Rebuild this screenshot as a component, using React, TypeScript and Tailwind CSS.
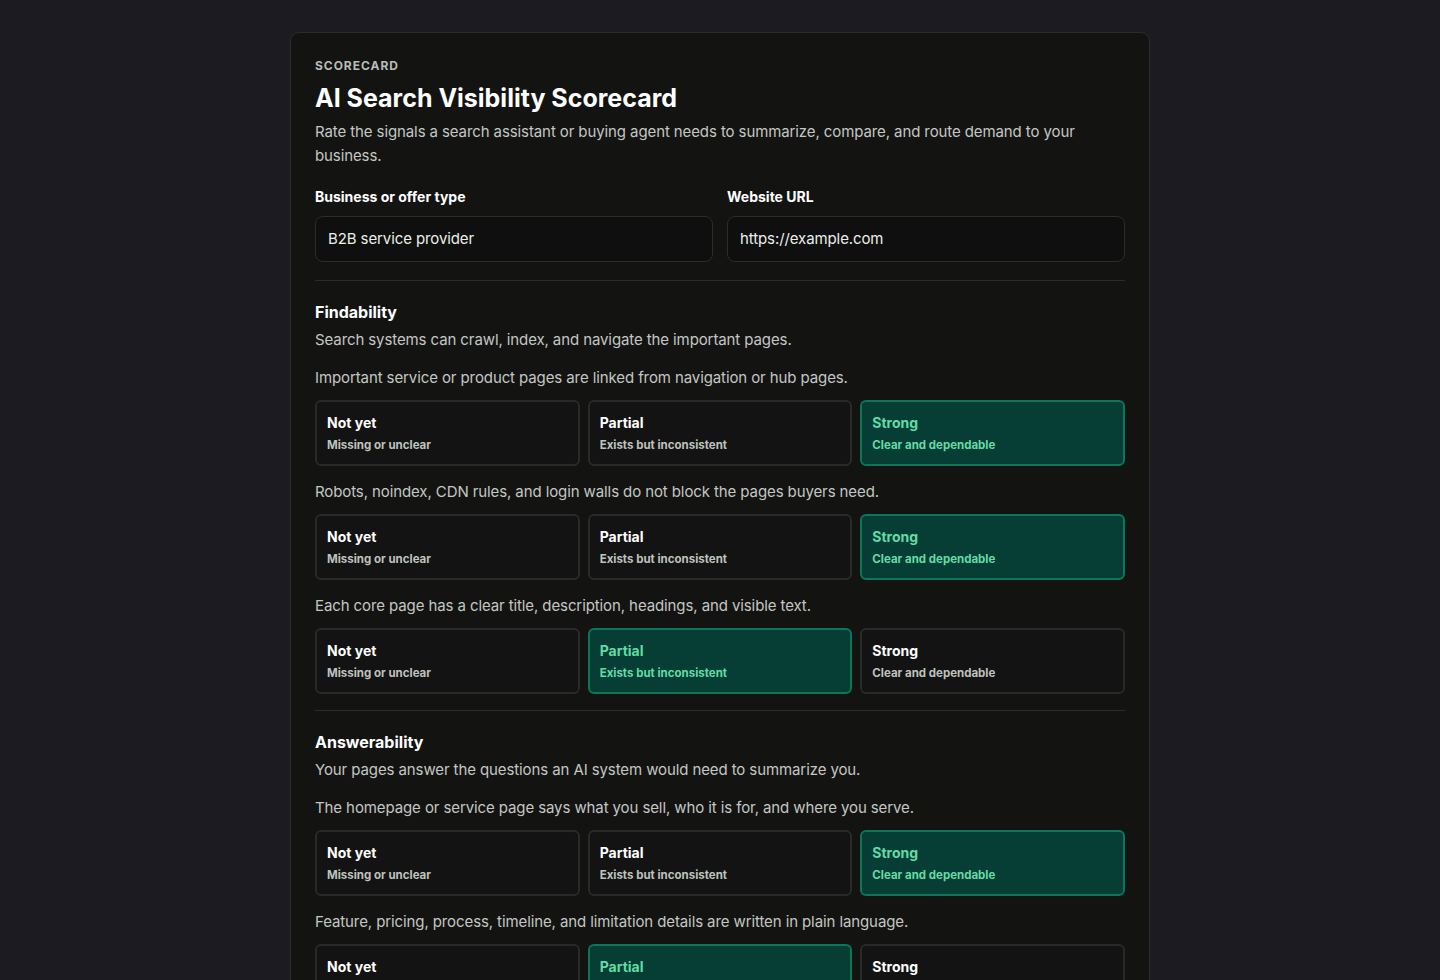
import React from "react";

type Sec = { title: string; desc: string; qs: { q: string; sel: number }[] };

const sections: Sec[] = [
  {
    title: "Findability",
    desc: "Search systems can crawl, index, and navigate the important pages.",
    qs: [
      { q: "Important service or product pages are linked from navigation or hub pages.", sel: 2 },
      { q: "Robots, noindex, CDN rules, and login walls do not block the pages buyers need.", sel: 2 },
      { q: "Each core page has a clear title, description, headings, and visible text.", sel: 1 },
    ],
  },
  {
    title: "Answerability",
    desc: "Your pages answer the questions an AI system would need to summarize you.",
    qs: [
      { q: "The homepage or service page says what you sell, who it is for, and where you serve.", sel: 2 },
      { q: "Feature, pricing, process, timeline, and limitation details are written in plain language.", sel: 1 },
      { q: "Common buyer questions are answered directly on the site.", sel: 0 },
    ],
  },
];

const opts = [
  { t: "Not yet", s: "Missing or unclear" },
  { t: "Partial", s: "Exists but inconsistent" },
  { t: "Strong", s: "Clear and dependable" },
];

export default function App() {
  return (
    <div
      className="min-h-screen bg-[#1c1b22] pt-[32px] pb-10"
      style={{ fontFamily: "Inter, 'Noto Sans', sans-serif" }}
    >
      <div className="mx-auto w-[860px] rounded-[9px] border border-[#2b2d2b] bg-[#131412] px-6 pt-[25px] pb-6">
        <div className="text-[12px] font-bold tracking-[0.08em] text-[#b9bcb8] leading-4">SCORECARD</div>
        <h1 className="mt-[9px] text-[25px] font-bold leading-[30px] text-white">
          AI Search Visibility Scorecard
        </h1>
        <p className="mt-[7px] text-[15px] leading-6 tracking-[-0.1px] text-[#c4c7c3]">
          Rate the signals a search assistant or buying agent needs to summarize, compare, and route demand to your business.
        </p>
        <div className="mt-[21px] grid grid-cols-2 gap-[14px]">
          {[
            ["Business or offer type", "B2B service provider"],
            ["Website URL", "https://example.com"],
          ].map(([l, v]) => (
            <div key={l}>
              <div className="text-[14px] font-bold leading-4 text-white">{l}</div>
              <div className="mt-[11px] flex h-[46px] items-center rounded-[8px] border border-[#2b2d2b] bg-[#0e0f0e] px-[12px] text-[15px] tracking-[-0.1px] text-[#eceeea]">
                {v}
              </div>
            </div>
          ))}
        </div>
        {sections.map((s, si) => (
          <div key={s.title} className={si === 0 ? "mt-[18px] border-t border-[#2b2d2b] pt-[19px]" : "mt-[16px] border-t border-[#2b2d2b] pt-[19px]"}>
            <h2 className="text-[16px] font-bold leading-6 text-white">{s.title}</h2>
            <p className="mt-[4px] text-[15px] leading-6 tracking-[-0.1px] text-[#c4c7c3]">{s.desc}</p>
            <div className="mt-[14px] flex flex-col gap-[14px]">
              {s.qs.map((q) => (
                <div key={q.q}>
                  <p className="text-[15px] leading-6 tracking-[-0.1px] text-[#c4c7c3]">{q.q}</p>
                  <div className="mt-[10px] grid grid-cols-3 gap-2">
                    {opts.map((o, i) => {
                      const on = i === q.sel;
                      return (
                        <div
                          key={o.t}
                          className={
                            on
                              ? "h-[66px] rounded-[6px] border-2 border-[#0b7658] bg-[#063d35] px-[10px] pt-[13px]"
                              : "h-[66px] rounded-[6px] border-2 border-[#282a28] bg-[#121312] px-[10px] pt-[13px]"
                          }
                        >
                          <div className={on ? "text-[14px] font-bold leading-4 text-[#62dca4]" : "text-[14px] font-bold leading-4 text-white"}>
                            {o.t}
                          </div>
                          <div className={on ? "mt-[6px] text-[11.5px] font-bold leading-4 text-[#62dca4]" : "mt-[6px] text-[11.5px] font-bold leading-4 text-[#bfc2be]"}>
                            {o.s}
                          </div>
                        </div>
                      );
                    })}
                  </div>
                </div>
              ))}
            </div>
          </div>
        ))}
      </div>
    </div>
  );
}
